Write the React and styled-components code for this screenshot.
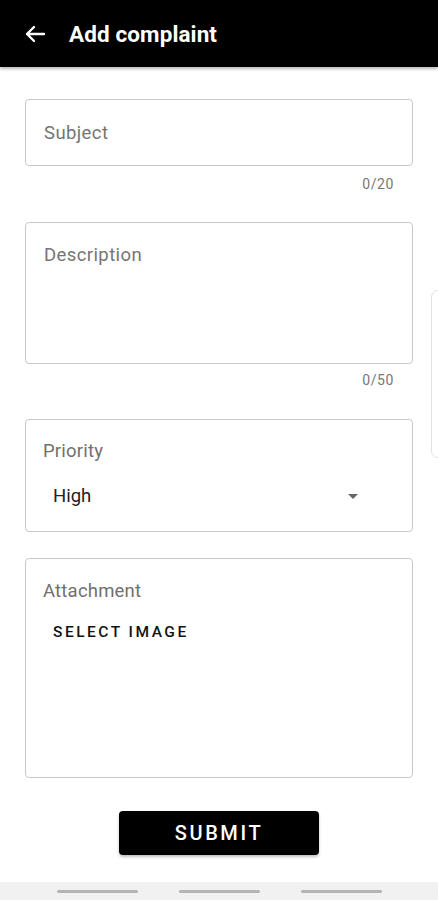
import React from "react";
import styled, { createGlobalStyle } from "styled-components";

const Global = createGlobalStyle`
  html, body { margin: 0; padding: 0; background: #fff; }
  body { font-family: Roboto, "Noto Sans", Arial, sans-serif; width: 438px; height: 900px; overflow: hidden; }
  #root { height: 900px; }
`;

const Page = styled.div`
  position: relative;
  width: 438px;
  height: 900px;
  display: flex;
  flex-direction: column;
  background: #fff;
`;

const Header = styled.header`
  height: 67px;
  flex: none;
  background: #000;
  display: flex;
  align-items: center;
  padding-left: 23px;
  box-shadow: 0 2px 3px rgba(0, 0, 0, 0.28);
  position: relative;
  z-index: 1;
`;

const BackIcon = styled.svg`
  width: 24px;
  height: 24px;
  display: block;
  margin-right: 22px;
`;

const Title = styled.h1`
  margin: 0;
  color: #fff;
  font-size: 22.5px;
  font-weight: 700;
  letter-spacing: 0.1px;
`;

const Form = styled.main`
  flex: 1;
  display: flex;
  flex-direction: column;
  padding: 0 25px;
`;

const Box = styled.div`
  box-sizing: border-box;
  height: ${(p) => p.$h}px;
  margin-top: ${(p) => p.$mt}px;
  border: 1px solid #c8c8c8;
  border-radius: 4px;
  display: flex;
  flex-direction: column;
  padding: ${(p) => p.$pad};
  justify-content: ${(p) => (p.$center ? "center" : "flex-start")};
`;

const Placeholder = styled.span`
  font-size: 18.5px;
  line-height: 22px;
  color: #757575;
  letter-spacing: 0.4px;
`;

const Counter = styled.div`
  margin-top: ${(p) => p.$mt}px;
  align-self: flex-end;
  margin-right: 19px;
  font-size: 14px;
  line-height: 16px;
  color: #777;
  letter-spacing: 0.6px;
`;

const FieldLabel = styled.span`
  font-size: 18.5px;
  line-height: 22px;
  color: #707070;
  letter-spacing: 0.2px;
`;

const SelectRow = styled.div`
  display: flex;
  align-items: center;
  justify-content: space-between;
  margin-top: 23px;
  padding-left: 10px;
  padding-right: 37px;
`;

const SelectValue = styled.span`
  font-size: 18.5px;
  line-height: 22px;
  color: #222;
`;

const Caret = styled.span`
  width: 0;
  height: 0;
  border-left: 5.5px solid transparent;
  border-right: 5.5px solid transparent;
  border-top: 5.5px solid #666;
`;

const SelectImage = styled.button`
  align-self: flex-start;
  margin-top: 20px;
  margin-left: 10px;
  padding: 0;
  border: none;
  background: none;
  font-family: inherit;
  font-size: 15.5px;
  line-height: 20px;
  font-weight: 500;
  letter-spacing: 2.5px;
  color: #111;
`;

const Submit = styled.button`
  align-self: center;
  margin-top: 33px;
  width: 200px;
  height: 44px;
  border: none;
  border-radius: 4px;
  background: #000;
  color: #fff;
  font-family: inherit;
  font-size: 20px;
  font-weight: 500;
  letter-spacing: 2.6px;
  box-shadow: 0 2px 3px rgba(0, 0, 0, 0.25);
`;

const NavBar = styled.nav`
  height: 18px;
  flex: none;
  background: #f1f1f1;
  display: flex;
  align-items: center;
  justify-content: center;
  gap: 41px;
`;

const NavLine = styled.span`
  width: 81px;
  height: 3px;
  border-radius: 2px;
  background: #b4b4b4;
`;

const EdgeHandle = styled.div`
  position: absolute;
  left: 431px;
  top: 290px;
  width: 20px;
  height: 168px;
  box-sizing: border-box;
  border: 1px solid #e2e2e2;
  border-radius: 7px;
  background: #fff;
`;

export default function App() {
  return (
    <Page>
      <Global />
      <Header>
        <BackIcon viewBox="0 0 24 24" fill="none">
          <path d="M21 12H4M11 5l-7 7 7 7" stroke="#fff" strokeWidth="2.4" strokeLinecap="round" strokeLinejoin="round" />
        </BackIcon>
        <Title>Add complaint</Title>
      </Header>
      <Form>
        <Box $h={67} $mt={32} $pad="0 18px" $center>
          <Placeholder>Subject</Placeholder>
        </Box>
        <Counter $mt={10}>0/20</Counter>
        <Box $h={142} $mt={30} $pad="21px 18px">
          <Placeholder>Description</Placeholder>
        </Box>
        <Counter $mt={8}>0/50</Counter>
        <Box $h={113} $mt={31} $pad="20px 17px">
          <FieldLabel>Priority</FieldLabel>
          <SelectRow>
            <SelectValue>High</SelectValue>
            <Caret />
          </SelectRow>
        </Box>
        <Box $h={220} $mt={26} $pad="21px 17px">
          <FieldLabel>Attachment</FieldLabel>
          <SelectImage>SELECT IMAGE</SelectImage>
        </Box>
        <Submit>SUBMIT</Submit>
      </Form>
      <NavBar>
        <NavLine />
        <NavLine />
        <NavLine />
      </NavBar>
      <EdgeHandle />
    </Page>
  );
}
